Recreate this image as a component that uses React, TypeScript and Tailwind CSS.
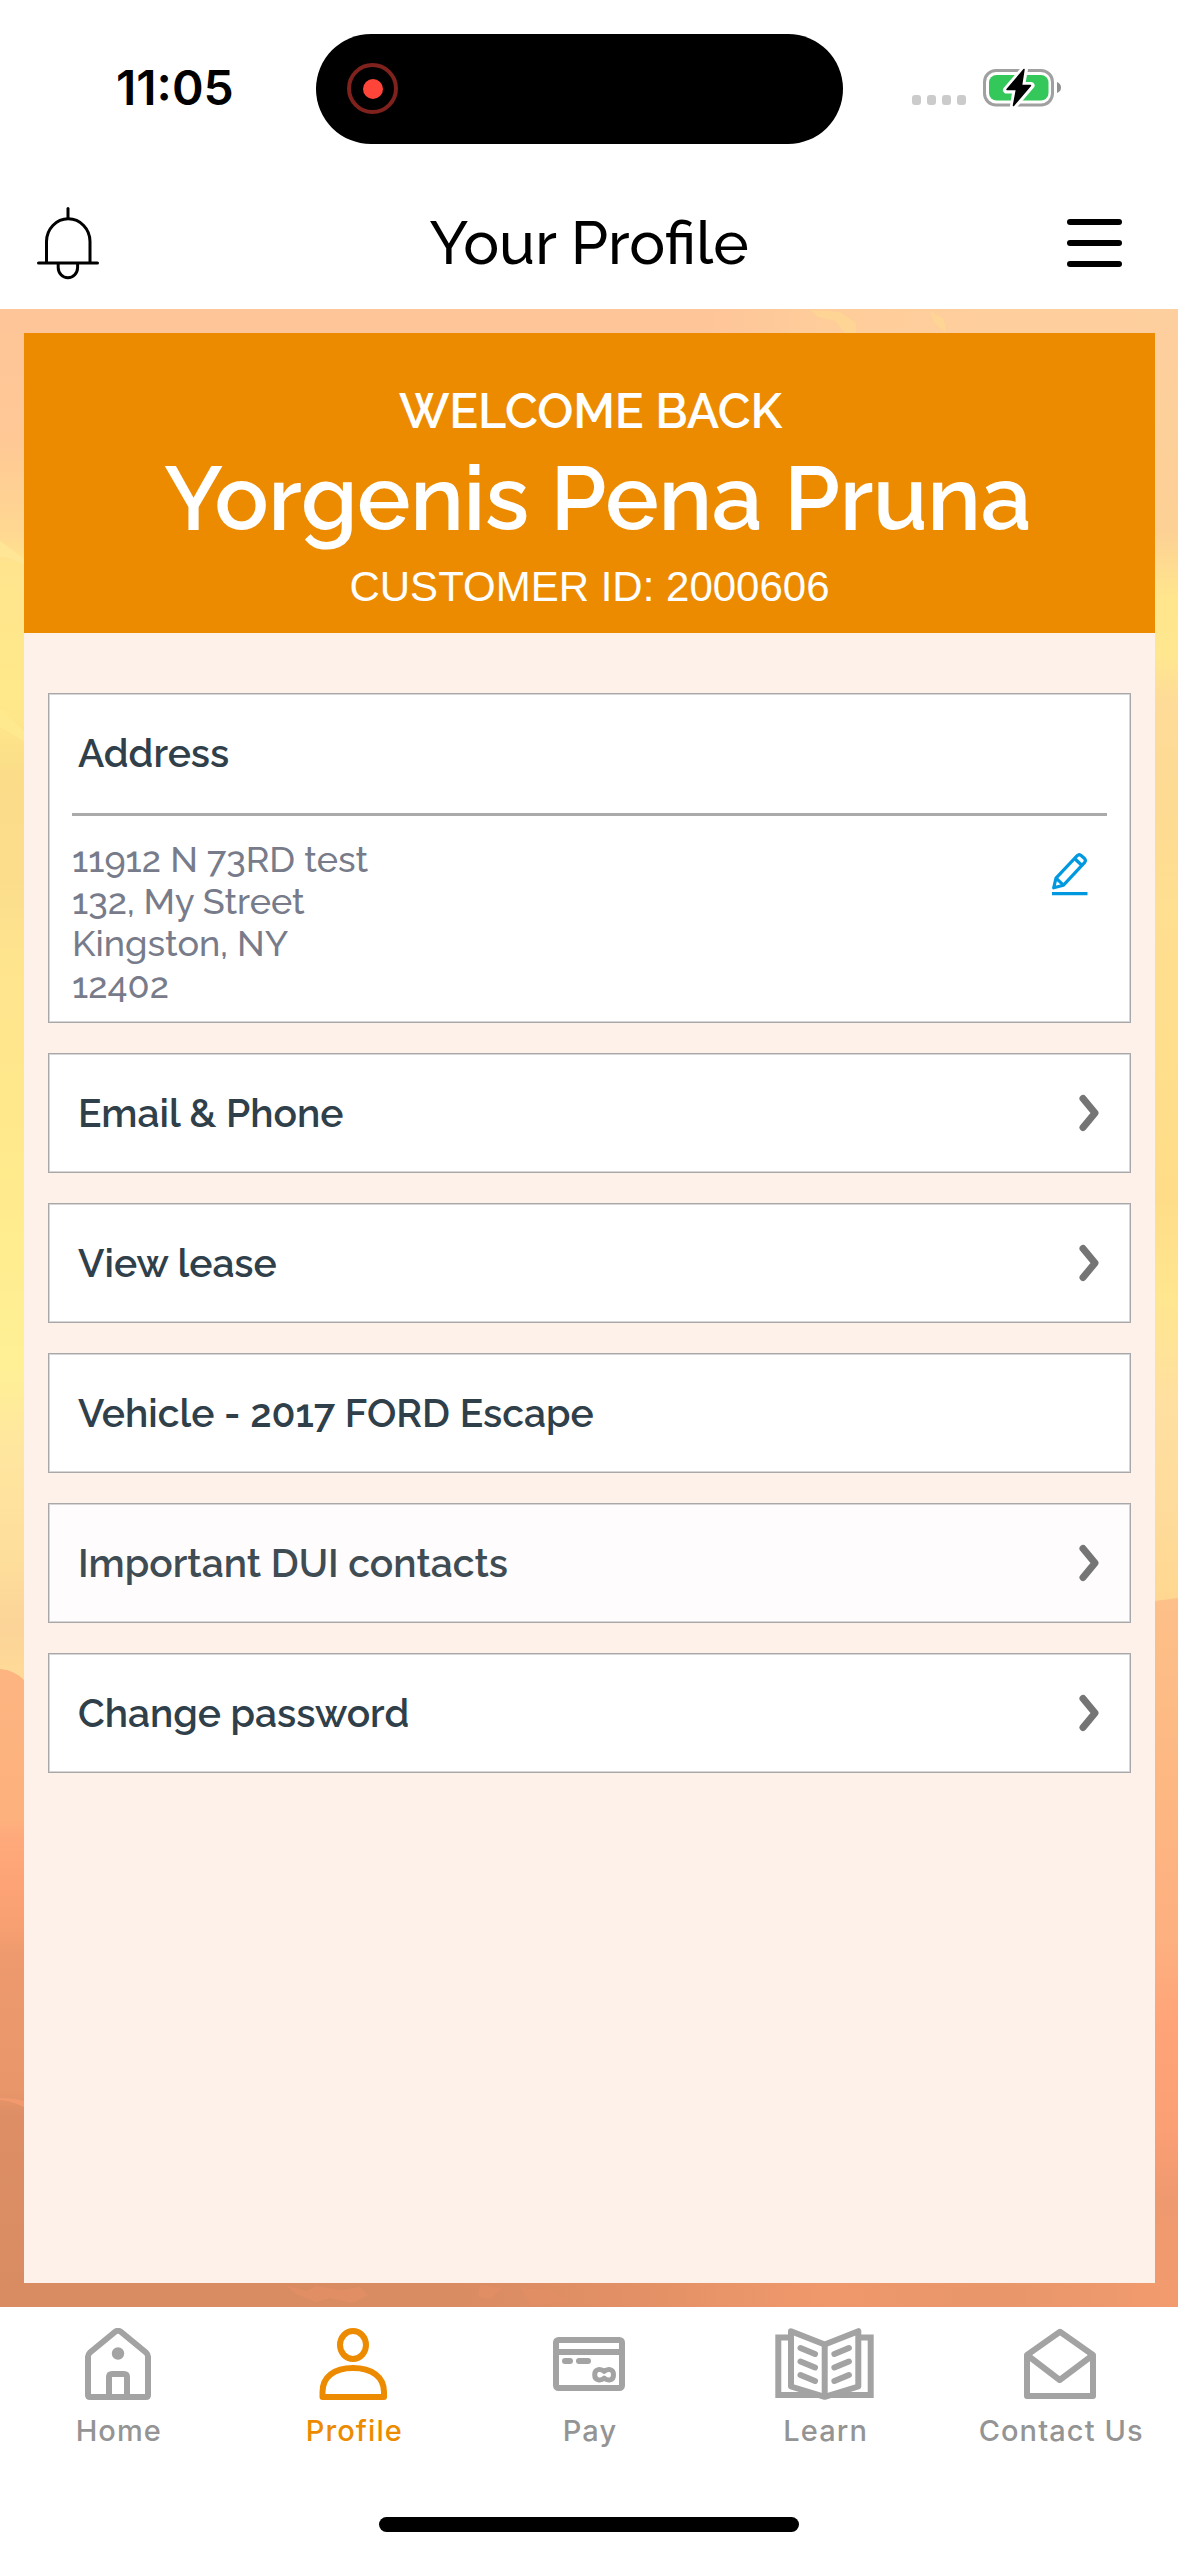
import type { ReactNode } from 'react';

const SKY_LEFT: [number, string][] = [
  [0, '#fec598'], [130, '#ffc895'], [225, '#ffd892'], [255, '#ffe48d'], [390, '#ffe98a'], [470, '#fbdc89'],
  [570, '#fbdd8c'], [650, '#ffe48e'], [810, '#ffe88b'], [940, '#ffed8f'], [1060, '#fff096'], [1140, '#ffe69f'],
  [1250, '#fede9b'], [1320, '#fbd398'], [1358, '#fed997'],
];
const SKY_RIGHT: [number, string][] = [
  [0, '#fecf9e'], [220, '#fdd095'], [290, '#ffe68c'], [345, '#ffe78f'], [395, '#fedb98'], [500, '#fddb92'],
  [600, '#ffdf90'], [890, '#ffdd88'], [990, '#ffe68f'], [1090, '#ffe0a0'], [1190, '#fedc9c'], [1290, '#ffd790'],
];

function Stops({ list, span }: { list: [number, string][]; span: number }) {
  return (
    <>
      {list.map(([y, color]) => (
        <stop key={y} offset={y / span} stopColor={color} />
      ))}
    </>
  );
}

function SunsetBackdrop() {
  return (
    <svg className="absolute inset-0 h-full w-full" viewBox="0 0 1178 1998" preserveAspectRatio="none" aria-hidden="true">
      <defs>
        <linearGradient id="skyL" x1="0" y1="0" x2="0" y2="1998" gradientUnits="userSpaceOnUse"><Stops list={SKY_LEFT} span={1998} /></linearGradient>
        <linearGradient id="skyR" x1="0" y1="0" x2="0" y2="1998" gradientUnits="userSpaceOnUse"><Stops list={SKY_RIGHT} span={1998} /></linearGradient>
        <linearGradient id="hillL" x1="0" y1="1360" x2="0" y2="1998" gradientUnits="userSpaceOnUse">
          <stop offset="0" stopColor="#fdb480" /><stop offset="0.23" stopColor="#fdb27d" /><stop offset="0.26" stopColor="#ffaa7c" />
          <stop offset="0.34" stopColor="#fda375" /><stop offset="0.4" stopColor="#f8a072" /><stop offset="0.45" stopColor="#ee9a6e" />
          <stop offset="0.66" stopColor="#e9966b" /><stop offset="0.7" stopColor="#dd8e64" /><stop offset="1" stopColor="#d98b62" />
        </linearGradient>
        <linearGradient id="hillR" x1="0" y1="1292" x2="0" y2="1998" gradientUnits="userSpaceOnUse">
          <stop offset="0" stopColor="#fdc088" /><stop offset="0.3" stopColor="#fdb681" /><stop offset="0.48" stopColor="#fdb080" />
          <stop offset="0.6" stopColor="#ffa478" /><stop offset="0.75" stopColor="#fb9f75" /><stop offset="0.85" stopColor="#ef996e" />
          <stop offset="1" stopColor="#f29b6f" />
        </linearGradient>
        <linearGradient id="top" x1="0" y1="0" x2="1" y2="0">
          <stop offset="0" stopColor="#fec598" /><stop offset="0.6" stopColor="#fec599" /><stop offset="0.7" stopColor="#fecd9a" /><stop offset="1" stopColor="#fecf9e" />
        </linearGradient>
        <linearGradient id="ground" x1="0" y1="0" x2="1" y2="0">
          <stop offset="0" stopColor="#d98b62" /><stop offset="0.38" stopColor="#d98b62" /><stop offset="0.52" stopColor="#e28f65" />
          <stop offset="0.7" stopColor="#ef986c" /><stop offset="0.85" stopColor="#e8966a" /><stop offset="1" stopColor="#f29b6f" />
        </linearGradient>
      </defs>
      <rect width="600" height="1998" fill="url(#skyL)" />
      <rect x="589" width="589" height="1998" fill="url(#skyR)" />
      <path d="M0 1360Q14 1361 24 1371H600V1998H0Z" fill="url(#hillL)" />
      <path d="M0 1789q14 0 24 3v6q-12-6-24-7z" fill="#f29a6e" />
      <path d="M589 1292H1155L1178 1289V1998H589Z" fill="url(#hillR)" />
      <rect width="1178" height="24" fill="url(#top)" />
      <path d="M810 1l30 2 16 11 0 10h-12l-8-12-18-4zM930 2l14 8 2 14-12-10z" fill="#ffd595" />
      <path d="M0 232q12 8 24 18v6q-14-8-24-8z" fill="#ffe596" />
      <path d="M0 400l24 22v10l-24-14z" fill="#ffe98f" />
      <rect y="1974" width="1178" height="24" fill="url(#ground)" />
      <path d="M286 1976l20 6 10-5 24 4 20-3 8 8-16 8-22-5-14 4-20-8zM480 1976l22 3-12 11-12-3zM520 1979l30 2 20 12-38 3z" fill="#e18e65" />
    </svg>
  );
}

function StatusBar() {
  return (
    <div className="relative h-[177px]">
      <div className="absolute left-[116px] top-[59px] font-[Inter] text-[48px] font-semibold leading-[58px] text-black">11:05</div>
      <div className="absolute left-[316px] top-[34px] h-[110px] w-[527px] rounded-full bg-black">
        <div className="absolute left-[31px] top-[29px] flex size-[51px] items-center justify-center rounded-full border-4 border-[#7f211c]">
          <div className="size-5 rounded-full bg-[#ff453a]" />
        </div>
      </div>
      <div className="absolute left-[912px] top-[95px] flex gap-[6px]">
        {[0, 1, 2, 3].map((i) => (
          <div key={i} className="h-[10px] w-[9px] rounded-[3px] bg-[#cbcbcb]" />
        ))}
      </div>
      <svg className="absolute left-[980px] top-[64px]" width="86" height="48" viewBox="980 64 86 48">
        <rect x="984.5" y="70.5" width="68" height="34.5" rx="11.5" fill="none" stroke="#a0a0a0" strokeWidth="3" />
        <path d="M1057 82v11q4-1.5 4-5.500t-4-5.500z" fill="#8f8f8f" />
        <rect x="989" y="75" width="59.500" height="25.500" rx="7.500" fill="#34c759" />
        <path d="M1024.500 69L1006.500 90H1016L1013.500 106L1031 85.500H1021.500Z" fill="#000" stroke="#fff" strokeWidth="7" strokeLinejoin="round" />
        <path d="M1024 69.500L1007 89.500H1016.500L1013.500 105.500L1030.500 85.500H1021.500Z" fill="#000" stroke="#000" strokeWidth="1.500" strokeLinejoin="round" />
      </svg>
    </div>
  );
}

function Header() {
  return (
    <div className="flex h-[132px] items-center justify-between pl-[36px] pr-[56px]">
      <svg width="64" height="76" viewBox="36 205 64 76" fill="none" stroke="#000" strokeWidth="3" strokeLinecap="round">
        <path d="M68 208.500V218" />
        <path d="M46.500 262V241.500a21.500 22.500 0 0 1 43.500 0V262" />
        <path d="M38.500 263H97.500" />
        <path d="M58.200 264v3.500a9.700 10.200 0 0 0 19.400 0V264" />
      </svg>
      <h1 className="-mr-[11px] text-[60px] font-medium leading-[70px] text-black">Your Profile</h1>
      <div className="flex flex-col gap-[15px]">
        <div className="h-[6px] w-[55px] rounded-full bg-black" />
        <div className="h-[6px] w-[55px] rounded-full bg-black" />
        <div className="h-[6px] w-[55px] rounded-full bg-black" />
      </div>
    </div>
  );
}

function Chevron() {
  return (
    <svg width="20" height="38" viewBox="0 0 20 38" fill="none" stroke="#757575" strokeWidth="7" strokeLinecap="round" strokeLinejoin="round">
      <path d="M4 4.500L16 19L4 33.500" />
    </svg>
  );
}

function Pencil() {
  return (
    <svg width="36" height="44" viewBox="1052 852 36 44" fill="none" stroke="#0099e0" strokeWidth="3.200" strokeLinejoin="round">
      <path d="M1053.700 887.800L1056 878.200L1077.200 855.700Q1079.300 853.700 1081.400 855.700L1084.500 858.500Q1086.300 860.500 1084.500 862.700L1063.500 885.200Z" />
      <path d="M1056 878.200L1063.500 885.200M1074.600 858.500L1082 865.500" />
      <path d="M1052 893.600H1087.500" />
    </svg>
  );
}

const ROWS = [
  { label: 'Email & Phone', arrow: true },
  { label: 'View lease', arrow: true },
  { label: 'Vehicle - 2017 FORD Escape', arrow: false },
  { label: 'Important DUI contacts', arrow: true, faded: true },
  { label: 'Change password', arrow: true },
];

const CARD = 'border border-[#a8a8aa] shadow-[inset_0_0_0_1px_#d6d6d6]';

function ProfilePanel() {
  return (
    <div className="relative flex h-[1950px] flex-col bg-[#fef1e9]">
      <div className="flex h-[300px] flex-col items-center bg-[#ed8b00] pt-[50px] text-white">
        <div className="pl-[2px] text-[48px] font-semibold leading-[56px] tracking-[-0.15px]">WELCOME BACK</div>
        <div className="mt-[6px] whitespace-nowrap pl-[16px] text-[90px] font-semibold leading-[106px] tracking-[-0.4px]">Yorgenis Pena Pruna</div>
        <div className="mt-[12px] font-['Liberation_Sans'] text-[42px] leading-[48px]">CUSTOMER ID: 2000606</div>
      </div>
      <div className="flex flex-col gap-[30px] px-6 pt-[60px]">
        <div className={`${CARD} h-[330px] bg-white px-[23px]`}>
          <div className="flex h-[119px] items-center pl-[6px] text-[39px] font-semibold text-[#30404a]">Address</div>
          <div className="h-[3px] bg-[#aaaaaa]" />
          <div className="flex justify-between pr-[19px] pt-[22px] text-[36px] font-medium leading-[42px] text-[#777b8a]">
            <div>
              <div>11912 N 73RD test</div>
              <div>132, My Street</div>
              <div>Kingston, NY</div>
              <div>12402</div>
            </div>
            <div className="pt-[14px]"><Pencil /></div>
          </div>
        </div>
        {ROWS.map((row) => (
          <div
            key={row.label}
            className={`${CARD} flex h-[120px] items-center justify-between pl-[29px] pr-[31px] text-[39px] font-semibold ${row.faded ? 'bg-[#fefcfd] text-[#404c54]' : 'bg-white text-[#30404a]'}`}
          >
            <span>{row.label}</span>
            {row.arrow && <Chevron />}
          </div>
        ))}
      </div>
    </div>
  );
}

function HomeIcon() {
  return (
    <svg width="66" height="73" viewBox="85 2328 66 73" fill="none" stroke="currentColor" strokeWidth="6" strokeLinejoin="round">
      <path d="M88 2356.500Q88 2354.500 90 2352.500L115.500 2331.500Q118 2330 120.500 2331.500L146 2352.500Q148 2354.500 148 2356.500V2395Q148 2397 146 2397H90Q88 2397 88 2395Z" />
      <path d="M109 2396V2377Q109 2374 112 2374H124Q127 2374 127 2377V2396" />
      <circle cx="118" cy="2353.500" r="6.200" fill="currentColor" stroke="none" />
    </svg>
  );
}

function ProfileIcon() {
  return (
    <svg width="69" height="73" viewBox="319 2328 69 73" fill="none" stroke="currentColor" strokeWidth="6" strokeLinejoin="round">
      <ellipse cx="353" cy="2345" rx="13" ry="14" />
      <path d="M322.500 2397V2392C322.500 2377 334 2368 353 2368S384 2377 384 2392V2397Z" />
    </svg>
  );
}

function PayIcon() {
  return (
    <svg width="72" height="73" viewBox="552 2328 72 73" fill="none" stroke="currentColor" strokeWidth="6" strokeLinejoin="round">
      <rect x="555" y="2340" width="66" height="48" rx="2.500" />
      <path d="M555 2352H621" />
      <path d="M564 2361H569M578 2361H587" strokeLinecap="round" />
      <path d="M603.200 2371.400C600 2368.500 593.700 2368.500 593.700 2374.700S600 2381 603.200 2378.200C606.500 2381 612.500 2381 612.500 2374.700S606.500 2368.500 603.200 2371.400Z" strokeWidth="5" />
    </svg>
  );
}

function LearnIcon() {
  return (
    <svg width="99" height="73" viewBox="774 2328 99 73" fill="none" stroke="currentColor" strokeWidth="6">
      <path d="M787 2337.500H777.300V2395H869.700V2337.500H860" />
      <path d="M790 2331.200L823.700 2344.500L857.300 2331.200V2386.500L823.700 2396.800L790 2386.500Z" fill="#fff" strokeLinejoin="round" />
      <path d="M823.700 2344V2396" />
      <path d="M799.500 2348L814 2354M799.500 2361.500L814 2367.500M799.500 2375L814 2381M847.900 2348L833.400 2354M847.900 2361.500L833.400 2367.500M847.900 2375L833.400 2381" strokeLinecap="round" />
    </svg>
  );
}

function ContactIcon() {
  return (
    <svg width="72" height="73" viewBox="1024 2328 72 73" fill="none" stroke="currentColor" strokeWidth="6" strokeLinejoin="round">
      <path d="M1027 2355L1060 2331.800L1093 2355V2396H1027Z" />
      <path d="M1027 2355L1059.700 2380L1093 2355" />
    </svg>
  );
}

const TABS: { label: string; icon: ReactNode; active?: boolean }[] = [
  { label: 'Home', icon: <HomeIcon /> },
  { label: 'Profile', icon: <ProfileIcon />, active: true },
  { label: 'Pay', icon: <PayIcon /> },
  { label: 'Learn', icon: <LearnIcon /> },
  { label: 'Contact Us', icon: <ContactIcon /> },
];

function TabBar() {
  return (
    <div className="flex h-[249px] flex-col items-center bg-white">
      <div className="grid h-[210px] w-full grid-cols-5 pt-[21px]">
        {TABS.map((tab) => (
          <div key={tab.label} className={`flex flex-col items-center ${tab.active ? 'text-[#ed8b00]' : 'text-[#a3a3a3]'}`}>
            {tab.icon}
            <div className={`mt-[12px] whitespace-nowrap pl-[2px] font-[Inter] text-[29px] font-medium leading-[36px] tracking-[1.1px] ${tab.active ? 'text-[#ed8b00]' : 'text-[#949494]'}`}>
              {tab.label}
            </div>
          </div>
        ))}
      </div>
      <div className="h-[15px] w-[420px] rounded-full bg-black" />
    </div>
  );
}

export default function App() {
  return (
    <div className="flex h-[2556px] w-[1178px] flex-col overflow-hidden bg-white font-[Raleway,sans-serif]">
      <StatusBar />
      <Header />
      <div className="relative h-[1998px] pb-6 pl-6 pr-[23px] pt-6">
        <SunsetBackdrop />
        <ProfilePanel />
      </div>
      <TabBar />
    </div>
  );
}
